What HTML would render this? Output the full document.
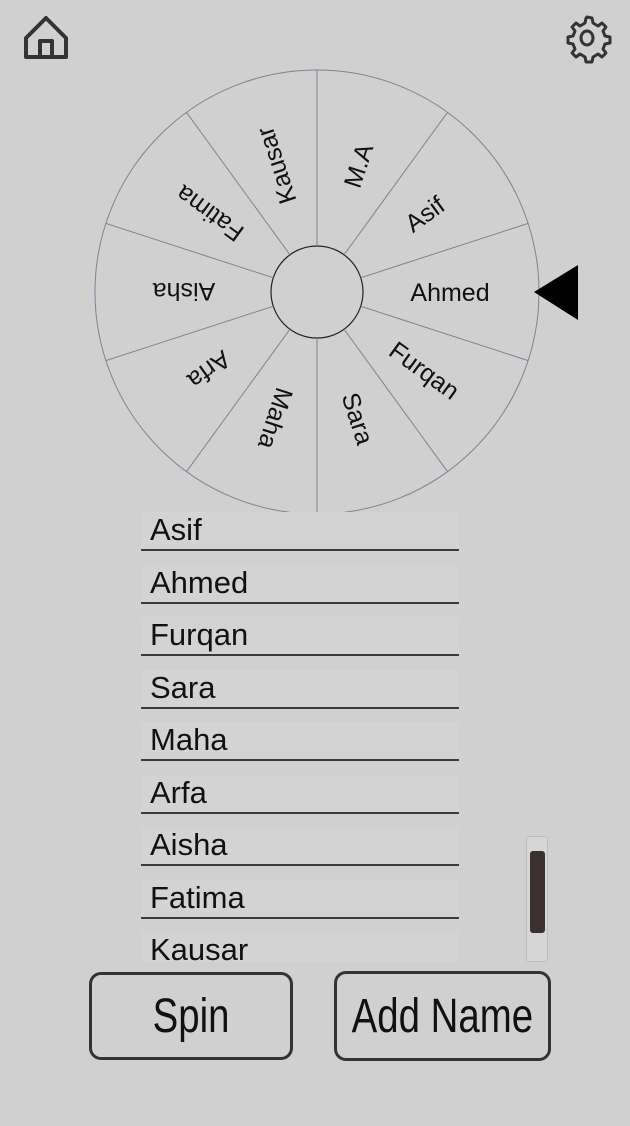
<!DOCTYPE html>
<html><head><style>
body{margin:0;width:630px;height:1126px;background:#d0d0d0;position:relative;overflow:hidden;font-family:"Liberation Sans",sans-serif}
.row{position:absolute;left:141px;width:318px;height:37px;border-bottom:2px solid #3a3a3a;background:#d3d3d3}
.row span{position:absolute;left:9px;top:0px;font-size:31px;color:#111}
.btn{position:absolute;border:3px solid #333;border-radius:12px;box-sizing:border-box;display:flex;align-items:center;justify-content:center;font-size:48px;color:#111;white-space:nowrap}
.btn span{display:inline-block;transform:scaleX(0.8)}
</style></head><body>
<svg width="630" height="1126" style="position:absolute;left:0;top:0">
<g fill="none" stroke="#333" stroke-width="4" stroke-linejoin="round">
<path d="M26 57 V38 L46 18 L66 38 V57 Z"/>
<path d="M40 57 V41 H52 V57"/>
</g>
<g fill="none" stroke="#333" stroke-width="3" stroke-linejoin="round">
<path d="M587 17 l5 1 1 5 5 3 4-3 4 4-3 4 2 5 5 1 v6 l-5 1-2 5 3 4-4 4-4-3-5 3-1 5 h-6 l-1-5-5-3-4 3-4-4 3-4-2-5-5-1 v-6 l5-1 2-5-3-4 4-4 4 3 5-3 1-5 z"/>
<ellipse cx="587" cy="38" rx="6" ry="7"/>
</g>
<circle cx="317" cy="292" r="222" fill="none" stroke="#7c8494" stroke-width="1"/>
<circle cx="317" cy="292" r="46" fill="none" stroke="#222" stroke-width="1.2"/>
<g stroke="#7c8494" stroke-width="1" id="sp"></g>
<g font-size="25" fill="#111" text-anchor="middle" id="lb"></g>
<polygon points="534,292 578,265 578,320" fill="#000"/>
</svg>
<script>
var sp=document.getElementById('sp'),lb=document.getElementById('lb'),ns='http://www.w3.org/2000/svg';
for(var k=0;k<10;k++){var a=(18+36*k)*Math.PI/180;var l=document.createElementNS(ns,'line');
l.setAttribute('x1',317+46*Math.cos(a));l.setAttribute('y1',292-46*Math.sin(a));
l.setAttribute('x2',317+222*Math.cos(a));l.setAttribute('y2',292-222*Math.sin(a));sp.appendChild(l);}
var n=['Ahmed','Asif','M.A','Kausar','Fatima','Aisha','Arfa','Maha','Sara','Furqan'];
for(var k=0;k<10;k++){var d=36*k,a=d*Math.PI/180;var x=317+133*Math.cos(a),y=292-133*Math.sin(a);
var t=document.createElementNS(ns,'text');t.setAttribute('x',x);t.setAttribute('y',y+9);
t.setAttribute('transform','rotate('+(-d)+' '+x+' '+y+')');t.textContent=n[k];lb.appendChild(t);}
</script>
<div class="row" style="top:512px"><span>Asif</span></div>
<div class="row" style="top:564.5px"><span>Ahmed</span></div>
<div class="row" style="top:617px"><span>Furqan</span></div>
<div class="row" style="top:669.5px"><span>Sara</span></div>
<div class="row" style="top:722px"><span>Maha</span></div>
<div class="row" style="top:774.5px"><span>Arfa</span></div>
<div class="row" style="top:827px"><span>Aisha</span></div>
<div class="row" style="top:879.5px"><span>Fatima</span></div>
<div class="row" style="top:932px;border:none;height:30px"><span>Kausar</span></div>
<div style="position:absolute;left:526px;top:836px;width:22px;height:126px;border:1px solid #bdbdbd;border-radius:3px;box-sizing:border-box;background:#d6d6d6"></div>
<div style="position:absolute;left:530px;top:851px;width:15px;height:82px;background:#3a3030;border-radius:3px"></div>
<div class="btn" style="left:89px;top:972px;width:204px;height:88px"><span>Spin</span></div>
<div class="btn" style="left:334px;top:971px;width:217px;height:90px"><span>Add Name</span></div>
</body></html>
